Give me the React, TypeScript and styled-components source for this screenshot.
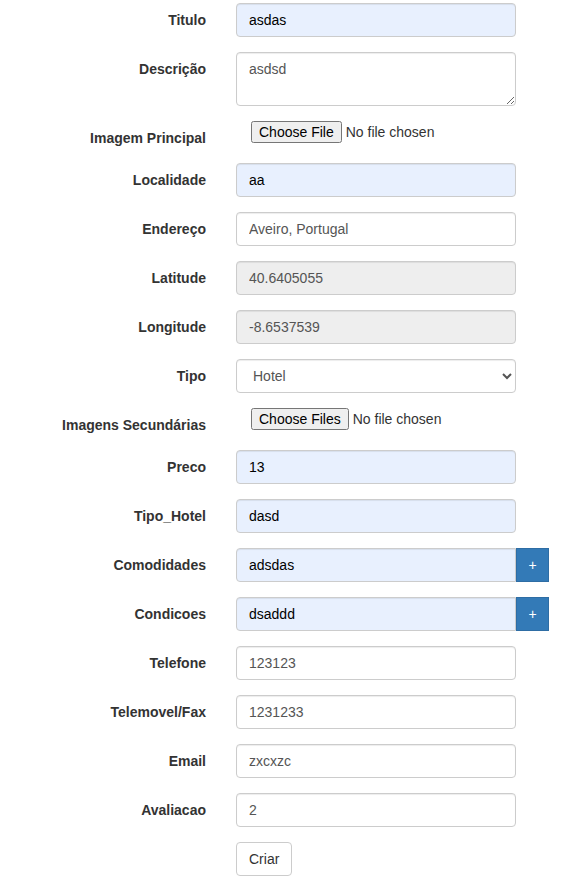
import React from "react";
import styled, { createGlobalStyle } from "styled-components";

const Global = createGlobalStyle`
  html, body { margin: 0; padding: 0; background: #fff; }
  body {
    font-family: "Liberation Sans", Arial, Helvetica, sans-serif;
    font-size: 14px;
    line-height: 1.42857143;
    color: #333;
  }
  * { box-sizing: border-box; }
`;

const Form = styled.form`
  display: flex;
  flex-direction: column;
  gap: 15px;
  padding-top: 3px;
`;

const Row = styled.div`
  display: grid;
  grid-template-columns: 206px 280px auto;
  column-gap: 30px;
  align-items: start;
`;

const Label = styled.label`
  display: block;
  text-align: right;
  padding-top: 7px;
  font-weight: bold;
  font-size: 14px;
  line-height: 20px;
  color: #333;
  white-space: nowrap;
`;

const fieldBase = `
  display: block;
  width: 280px;
  height: 34px;
  padding: 6px 12px;
  font-family: "Liberation Sans", Arial, Helvetica, sans-serif;
  font-size: 14px;
  line-height: 1.42857143;
  border: 1px solid #ccc;
  border-radius: 4px;
  box-shadow: inset 0 1px 1px rgba(0,0,0,.075);
  outline: none;
  margin: 0;
`;

const Input = styled.input<{ $filled?: boolean; $grouped?: boolean }>`
  ${fieldBase}
  background: ${(p) => (p.$filled ? "#e8f0fe" : "#fff")};
  color: ${(p) => (p.$filled ? "#000" : "#555")};
  ${(p) => (p.$grouped ? "border-top-right-radius: 0; border-bottom-right-radius: 0;" : "")}
  &:disabled {
    background: #eee;
    color: #555;
    opacity: 1;
    -webkit-text-fill-color: #555;
  }
`;

const TextArea = styled.textarea`
  ${fieldBase}
  height: 54px;
  background: #fff;
  color: #555;
  resize: vertical;
`;

const Select = styled.select`
  ${fieldBase}
  background: #fff;
  color: #555;
`;

const FileInput = styled.input`
  display: block;
  margin: 0 0 0 15px;
  font-family: "Liberation Sans", Arial, Helvetica, sans-serif;
  font-size: 14px;
  color: #333;
`;

const Group = styled.div`
  display: flex;
  grid-column: 2 / span 2;
`;

const AddonButton = styled.button`
  width: 33px;
  height: 34px;
  margin: 0;
  padding: 0;
  border: 1px solid #2e6da4;
  background: #337ab7;
  color: #fff;
  font-family: "Liberation Sans", Arial, Helvetica, sans-serif;
  font-size: 14px;
  line-height: 1;
  border-radius: 0;
`;

const SubmitButton = styled.button`
  grid-column: 2;
  justify-self: start;
  height: 34px;
  padding: 6px 12px;
  font-family: "Liberation Sans", Arial, Helvetica, sans-serif;
  font-size: 14px;
  line-height: 1.42857143;
  color: #333;
  background: #fff;
  border: 1px solid #ccc;
  border-radius: 4px;
`;

type Field = {
  label: string;
  value: string;
  filled?: boolean;
  disabled?: boolean;
};

const TextRow = ({ label, value, filled, disabled }: Field) => (
  <Row>
    <Label>{label}</Label>
    <Input type="text" defaultValue={value} $filled={filled} disabled={disabled} />
  </Row>
);

const GroupRow = ({ label, value }: Field) => (
  <Row>
    <Label>{label}</Label>
    <Group>
      <Input type="text" defaultValue={value} $filled $grouped />
      <AddonButton type="button">+</AddonButton>
    </Group>
  </Row>
);

const FileRow = ({ label, multiple }: { label: string; multiple?: boolean }) => (
  <Row>
    <Label>{label}</Label>
    <FileInput type="file" multiple={multiple} />
  </Row>
);

export default function App() {
  return (
    <>
      <Global />
      <Form onSubmit={(e) => e.preventDefault()}>
        <TextRow label="Titulo" value="asdas" filled />
        <Row>
          <Label>Descrição</Label>
          <TextArea defaultValue="asdsd" />
        </Row>
        <FileRow label="Imagem Principal" />
        <TextRow label="Localidade" value="aa" filled />
        <TextRow label="Endereço" value="Aveiro, Portugal" />
        <TextRow label="Latitude" value="40.6405055" disabled />
        <TextRow label="Longitude" value="-8.6537539" disabled />
        <Row>
          <Label>Tipo</Label>
          <Select defaultValue="Hotel">
            <option>Hotel</option>
            <option>Hostel</option>
            <option>Apartamento</option>
          </Select>
        </Row>
        <FileRow label="Imagens Secundárias" multiple />
        <TextRow label="Preco" value="13" filled />
        <TextRow label="Tipo_Hotel" value="dasd" filled />
        <GroupRow label="Comodidades" value="adsdas" />
        <GroupRow label="Condicoes" value="dsaddd" />
        <TextRow label="Telefone" value="123123" />
        <TextRow label="Telemovel/Fax" value="1231233" />
        <TextRow label="Email" value="zxcxzc" />
        <TextRow label="Avaliacao" value="2" />
        <Row>
          <SubmitButton type="submit">Criar</SubmitButton>
        </Row>
      </Form>
    </>
  );
}
